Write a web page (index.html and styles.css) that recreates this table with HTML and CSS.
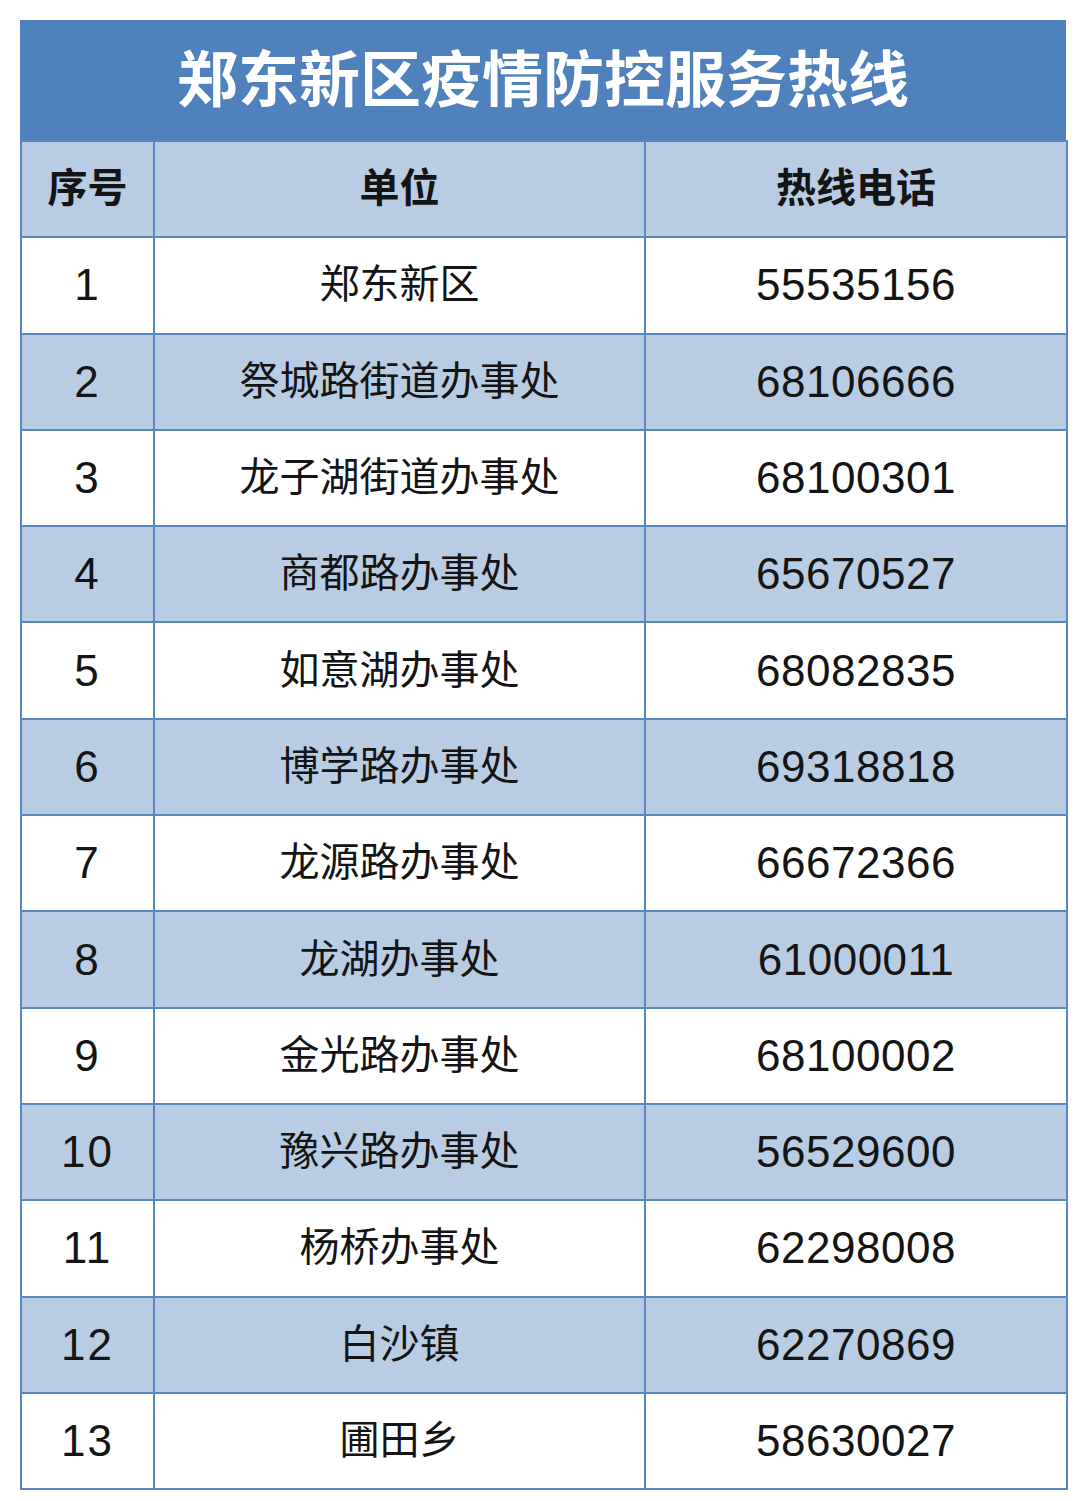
FILE: index.html
```html
<!DOCTYPE html>
<html lang="zh-CN">
<head>
<meta charset="utf-8">
<title>郑东新区疫情防控服务热线</title>
<link rel="stylesheet" href="styles.css">
</head>
<body>
<div class="sheet">
  <div class="title">郑东新区疫情防控服务热线</div>
  <table class="hotline">
    <colgroup>
      <col class="c-no">
      <col class="c-unit">
      <col class="c-tel">
    </colgroup>
    <thead>
      <tr class="alt"><th>序号</th><th>单位</th><th>热线电话</th></tr>
    </thead>
    <tbody>
      <tr><td class="no">1</td><td class="unit">郑东新区</td><td class="tel">55535156</td></tr>
      <tr class="alt"><td class="no">2</td><td class="unit">祭城路街道办事处</td><td class="tel">68106666</td></tr>
      <tr><td class="no">3</td><td class="unit">龙子湖街道办事处</td><td class="tel">68100301</td></tr>
      <tr class="alt"><td class="no">4</td><td class="unit">商都路办事处</td><td class="tel">65670527</td></tr>
      <tr><td class="no">5</td><td class="unit">如意湖办事处</td><td class="tel">68082835</td></tr>
      <tr class="alt"><td class="no">6</td><td class="unit">博学路办事处</td><td class="tel">69318818</td></tr>
      <tr><td class="no">7</td><td class="unit">龙源路办事处</td><td class="tel">66672366</td></tr>
      <tr class="alt"><td class="no">8</td><td class="unit">龙湖办事处</td><td class="tel">61000011</td></tr>
      <tr><td class="no">9</td><td class="unit">金光路办事处</td><td class="tel">68100002</td></tr>
      <tr class="alt"><td class="no">10</td><td class="unit">豫兴路办事处</td><td class="tel">56529600</td></tr>
      <tr><td class="no">11</td><td class="unit">杨桥办事处</td><td class="tel">62298008</td></tr>
      <tr class="alt"><td class="no">12</td><td class="unit">白沙镇</td><td class="tel">62270869</td></tr>
      <tr><td class="no">13</td><td class="unit">圃田乡</td><td class="tel">58630027</td></tr>
    </tbody>
  </table>
</div>
</body>
</html>
```
FILE: styles.css
```css
html, body {
  margin: 0;
  padding: 0;
  background: #ffffff;
}
body {
  font-family: "Noto Sans CJK SC", "Liberation Sans", sans-serif;
  color: #141414;
}
.sheet {
  width: 1046px;
  margin: 20px 0 0 20px;
}
.title {
  height: 120px;
  background: #4f81bd;
  color: #ffffff;
  font-weight: 700;
  font-size: 61px;
  line-height: 1;
  display: flex;
  align-items: center;
  justify-content: center;
  padding-bottom: 10px;
  box-sizing: border-box;
}
.hotline {
  width: 1046px;
  border-collapse: collapse;
  table-layout: fixed;
}
.c-no { width: 133px; }
.c-unit { width: 491px; }
.c-tel { width: 422px; }
.hotline tr {
  height: 96.3px;
}
.hotline th,
.hotline td {
  border: 2px solid #5a86c1;
  padding: 0;
  text-align: center;
  vertical-align: middle;
  font-size: 40px;
  line-height: 1;
  font-weight: 400;
}
.hotline th,
.hotline td.unit {
  padding-bottom: 8px;
}
.hotline th {
  font-weight: 700;
}
.hotline tr.alt {
  background: #b8cce4;
}
.hotline td.no,
.hotline td.tel {
  font-family: "Liberation Sans", "Noto Sans CJK SC", sans-serif;
  font-size: 44px;
}
.hotline td.tel {
  letter-spacing: 0.5px;
}
.hotline td.no {
  letter-spacing: 2px;
}
```
